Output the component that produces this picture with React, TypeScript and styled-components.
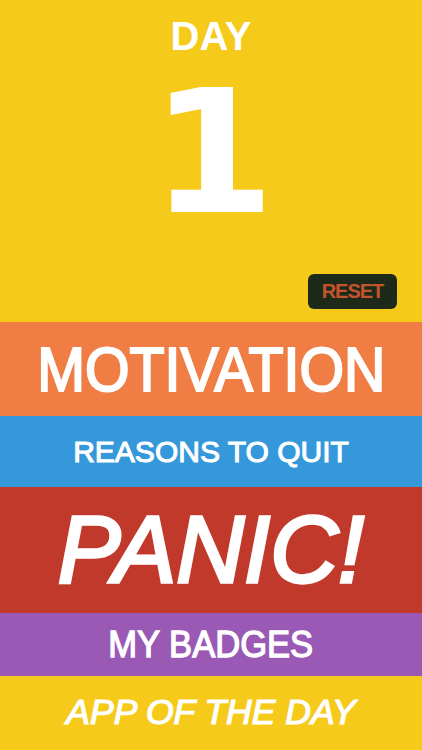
import React from "react";
import styled, { createGlobalStyle } from "styled-components";

const GlobalStyle = createGlobalStyle`
  html, body {
    margin: 0;
    padding: 0;
  }
  body {
    font-family: "Liberation Sans", Arial, sans-serif;
    background: #f6ca1a;
  }
`;

interface Band {
  label: string;
  color: string;
  height: number;
  size: number;
  italic?: boolean;
  squeeze?: number;
}

const bands: Band[] = [
  { label: "MOTIVATION", color: "#f07d44", height: 94, size: 63, squeeze: 0.91 },
  { label: "REASONS TO QUIT", color: "#3598db", height: 71, size: 30 },
  { label: "PANIC!", color: "#c0392b", height: 126, size: 94, italic: true },
  { label: "MY BADGES", color: "#9b59b6", height: 63, size: 36, squeeze: 0.96 },
  { label: "APP OF THE DAY", color: "#f6ca1a", height: 74, size: 35.5, italic: true },
];

const App: React.FC = () => {
  return (
    <Screen>
      <GlobalStyle />
      <Counter>
        <DayLabel>DAY</DayLabel>
        <DayNumber>1</DayNumber>
        <ResetButton>RESET</ResetButton>
      </Counter>
      {bands.map((b) => (
        <MenuRow key={b.label} $color={b.color} $height={b.height}>
          <MenuLabel $size={b.size} $italic={b.italic} $squeeze={b.squeeze ?? 1}>
            {b.label}
          </MenuLabel>
        </MenuRow>
      ))}
    </Screen>
  );
};

export default App;

/* Styled */

const Screen = styled.div`
  width: 422px;
  height: 750px;
  display: flex;
  flex-direction: column;
  overflow: hidden;
`;

const Counter = styled.div`
  height: 322px;
  box-sizing: border-box;
  padding: 16px 25px 13px;
  display: flex;
  flex-direction: column;
  align-items: center;
  background: #f6ca1a;
`;

const DayLabel = styled.div`
  font-size: 40px;
  line-height: 1;
  font-weight: 700;
  color: #ffffff;
`;

const DayNumber = styled.div`
  margin-top: 32px;
  margin-left: 4px;
  font-family: "DejaVu Sans", sans-serif;
  font-size: 172px;
  font-weight: 700;
  line-height: 0.75;
  color: #ffffff;
  transform: scaleX(1.04);
`;

const ResetButton = styled.button`
  margin-top: auto;
  align-self: flex-end;
  width: 89px;
  height: 35px;
  padding: 0;
  border: none;
  border-radius: 6px;
  background: #1d2a19;
  color: #c4532e;
  font-family: "Liberation Sans", Arial, sans-serif;
  font-size: 20px;
  font-weight: 700;
  letter-spacing: -1px;
  cursor: pointer;
`;

const MenuRow = styled.div<{ $color: string; $height: number }>`
  height: ${(p) => p.$height}px;
  flex-shrink: 0;
  display: flex;
  align-items: center;
  justify-content: center;
  background: ${(p) => p.$color};
`;

const MenuLabel = styled.span<{ $size: number; $italic?: boolean; $squeeze: number }>`
  display: inline-block;
  font-size: ${(p) => p.$size}px;
  font-style: ${(p) => (p.$italic ? "italic" : "normal")};
  line-height: 1;
  color: #ffffff;
  -webkit-text-stroke: ${(p) => (p.$size * 0.035).toFixed(2)}px #ffffff;
  white-space: nowrap;
  transform: scaleX(${(p) => p.$squeeze});
`;
